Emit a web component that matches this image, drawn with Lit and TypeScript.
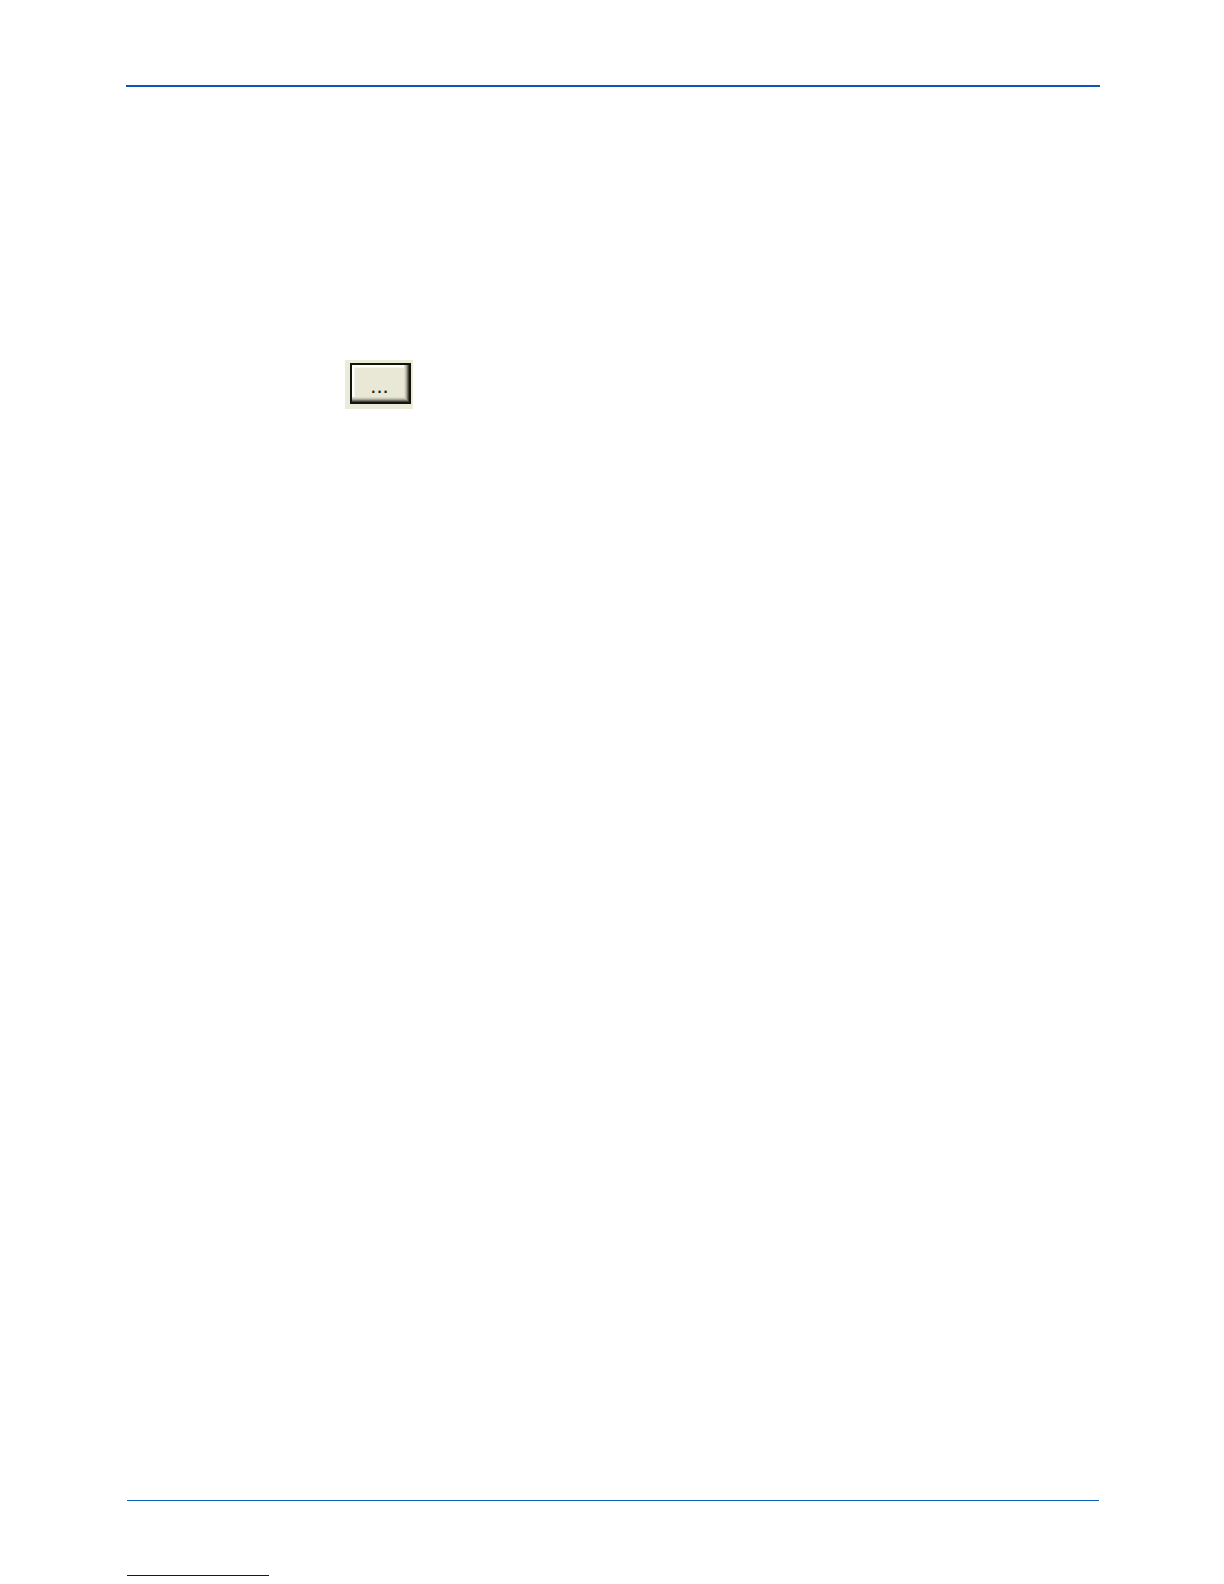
import { LitElement, html, css } from "lit";
import { customElement } from "lit/decorators.js";

@customElement("browse-button")
export class BrowseButton extends LitElement {
  static styles = css`
    :host {
      display: inline-block;
      padding: 3px 2px 5px 5px;
      background: #ebebda;
    }
    .button {
      display: block;
      box-sizing: border-box;
      width: 61px;
      height: 41px;
      padding: 5px 2px 0 0;
      border: 2px solid #14140c;
      border-radius: 0;
      background: #e9e8d7;
      box-shadow:
        inset -1px -1px 0 #45453a,
        inset -2px -2px 0 #77766a,
        inset -3px -3px 0 #a5a496,
        inset -4px -4px 0 #c8c7b6,
        inset -5px -5px 0 #dddccb,
        inset 2px 2px 0 #fffffa,
        inset 3px 3px 0 #f4f4ea;
      color: #22221a;
      font-family: "Liberation Sans", Arial, sans-serif;
      font-size: 22px;
      line-height: 30px;
      text-align: center;
    }
  `;

  render() {
    return html`<button class="button" type="button" aria-label="Browse">...</button>`;
  }
}

@customElement("app-root")
export class AppRoot extends LitElement {
  static styles = css`
    :host {
      display: block;
      background: #fff;
    }
    .page {
      display: flex;
      flex-direction: column;
      box-sizing: border-box;
      min-height: 100vh;
      padding: 85px 124px 8px 126px;
    }
    .header {
      height: 2px;
      background: #0c56b8;
    }
    .content {
      flex: 1;
      padding: 273px 0 0 219px;
    }
    .footer {
      padding: 0 1px;
    }
    .rule {
      height: 1px;
      background: #0c60b8;
    }
    .underline {
      width: 142px;
      height: 1px;
      margin-top: 74px;
      background: #08089c;
    }
  `;

  render() {
    return html`
      <div class="page">
        <header class="header"></header>
        <main class="content"><browse-button></browse-button></main>
        <footer class="footer">
          <div class="rule"></div>
          <div class="underline"></div>
        </footer>
      </div>
    `;
  }
}
